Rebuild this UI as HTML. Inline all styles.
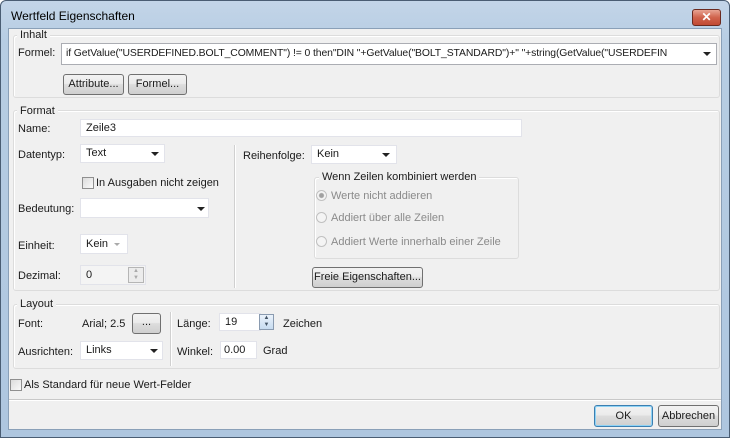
<!DOCTYPE html>
<html><head><meta charset="utf-8"><style>
*{box-sizing:border-box;margin:0;padding:0}
body{width:730px;height:438px;overflow:hidden;background:#fff;font-family:"Liberation Sans",sans-serif;font-size:11px;color:#1a1a1a;position:relative}
.frame{position:absolute;left:0;top:0;width:730px;height:438px;border-radius:6px 6px 0 0;background:linear-gradient(#c3d5e8,#b7cde3 40px,#aec6df);border:1px solid #4a5d73}
.client{position:absolute;left:8px;top:28px;width:714px;height:402px;background:#f0f0f0;border:1px solid #8aa0b8}
.a{position:absolute;white-space:nowrap}
.grp{position:absolute;border:1px solid #dcdcdc;border-radius:3px;background:#f0f0f0;box-shadow:inset 1px 1px 0 #fff}
.gl{position:absolute;background:#f0f0f0;padding:0 3px;line-height:12px}
.in{position:absolute;background:#fff;border:1px solid #e2e3ea;line-height:16px;padding-left:5px;overflow:hidden;white-space:nowrap}
.btn{position:absolute;border:1px solid #707070;border-radius:3px;background:linear-gradient(#f2f2f2,#ebebeb 45%,#dddddd 50%,#cfcfcf);text-align:center;line-height:19px}
.arr{position:absolute;width:0;height:0;border-left:4px solid transparent;border-right:4px solid transparent;border-top:4px solid #222}
.cb{position:absolute;width:12px;height:12px;border:1px solid #8f8f8f;background:linear-gradient(135deg,#dcdcdc,#fafafa)}
.rd{position:absolute;width:11px;height:11px;border:1px solid #c0c0c0;border-radius:50%;background:#f4f4f4}
.gray{color:#8a8a8a}
</style></head><body>
<div class="frame"></div>
<div class="a" style="left:11px;top:9px;font-size:12px;color:#000">Wertfeld Eigenschaften</div>
<div class="a" style="left:692px;top:9px;width:29px;height:17px;border:1px solid #6b2a1f;border-radius:3px;background:linear-gradient(#e8a493,#d0634c 50%,#c14a33);color:#fff;text-align:center;font-weight:bold;font-size:12px;line-height:15px">✕</div>
<div class="client"></div>

<div class="grp" style="left:13px;top:35px;width:707px;height:63px"></div>
<div class="gl" style="left:17px;top:29px">Inhalt</div>
<div class="a" style="left:18px;top:47px">Formel:</div>
<div class="in" style="left:61px;top:43px;width:656px;height:22px;border-color:#abadb3;line-height:20px;padding-left:4px;padding-right:24px;font-size:10.4px;letter-spacing:-0.1px">if GetValue("USERDEFINED.BOLT_COMMENT") != 0 then"DIN "+GetValue("BOLT_STANDARD")+" "+string(GetValue("USERDEFIN</div>
<div class="arr" style="left:703px;top:52px"></div>
<div class="btn" style="left:63px;top:74px;width:61px;height:21px">Attribute...</div>
<div class="btn" style="left:128px;top:74px;width:59px;height:21px">Formel...</div>

<div class="grp" style="left:13px;top:110px;width:707px;height:181px"></div>
<div class="gl" style="left:17px;top:105px">Format</div>
<div class="a" style="left:18px;top:123px">Name:</div>
<div class="in" style="left:80px;top:119px;width:442px;height:18px">Zeile3</div>
<div class="a" style="left:18px;top:149px">Datentyp:</div>
<div class="in" style="left:80px;top:144px;width:85px;height:19px">Text</div>
<div class="arr" style="left:151px;top:152px"></div>
<div class="a" style="left:234px;top:145px;width:1px;height:143px;background:#d0d0d0;box-shadow:1px 0 0 #fff"></div>
<div class="a" style="left:243px;top:150px">Reihenfolge:</div>
<div class="in" style="left:311px;top:145px;width:86px;height:19px">Kein</div>
<div class="arr" style="left:382px;top:153px"></div>
<div class="cb" style="left:82px;top:177px"></div>
<div class="a" style="left:96px;top:177px">In Ausgaben nicht zeigen</div>
<div class="grp" style="left:314px;top:177px;width:205px;height:82px"></div>
<div class="gl" style="left:319px;top:171px">Wenn Zeilen kombiniert werden</div>
<div class="rd" style="left:316px;top:190px;background:radial-gradient(#a0a0a0 2px,#f4f4f4 3px)"></div>
<div class="a gray" style="left:331px;top:190px">Werte nicht addieren</div>
<div class="rd" style="left:316px;top:212px"></div>
<div class="a gray" style="left:331px;top:212px">Addiert über alle Zeilen</div>
<div class="rd" style="left:316px;top:236px"></div>
<div class="a gray" style="left:331px;top:236px">Addiert Werte innerhalb einer Zeile</div>
<div class="a" style="left:18px;top:203px">Bedeutung:</div>
<div class="in" style="left:80px;top:198px;width:129px;height:20px"></div>
<div class="arr" style="left:197px;top:207px"></div>
<div class="a" style="left:18px;top:240px">Einheit:</div>
<div class="in" style="left:80px;top:234px;width:48px;height:20px;line-height:18px">Kein</div>
<div class="arr" style="left:114px;top:243px;border-top-color:#aaa;border-width:3px 3px 0"></div>
<div class="a" style="left:18px;top:270px">Dezimal:</div>
<div class="in" style="left:80px;top:265px;width:66px;height:20px;background:#f4f4f4;line-height:18px">0</div>
<div class="a" style="left:128px;top:267px;width:16px;height:16px;border:1px solid #b5b5b5;background:#ececec;font-size:6px;color:#aaa;text-align:center;line-height:7px">▲<br>▼</div>
<div class="btn" style="left:312px;top:267px;width:111px;height:21px">Freie Eigenschaften...</div>

<div class="grp" style="left:13px;top:304px;width:707px;height:65px"></div>
<div class="gl" style="left:17px;top:298px">Layout</div>
<div class="a" style="left:18px;top:318px">Font:</div>
<div class="a" style="left:82px;top:318px">Arial; 2.5</div>
<div class="btn" style="left:132px;top:313px;width:29px;height:21px;line-height:17px">...</div>
<div class="a" style="left:170px;top:312px;width:1px;height:54px;background:#d0d0d0;box-shadow:1px 0 0 #fff"></div>
<div class="a" style="left:177px;top:318px">Länge:</div>
<div class="in" style="left:219px;top:313px;width:42px;height:18px">19</div>
<div class="a" style="left:259px;top:314px;width:15px;height:16px;border:1px solid #8a9bb0;background:linear-gradient(#eaf2fb,#c7dcf0);font-size:6px;color:#456;text-align:center;line-height:7px">▲<br>▼</div>
<div class="a" style="left:283px;top:318px">Zeichen</div>
<div class="a" style="left:18px;top:346px">Ausrichten:</div>
<div class="in" style="left:80px;top:341px;width:83px;height:19px">Links</div>
<div class="arr" style="left:150px;top:349px"></div>
<div class="a" style="left:177px;top:346px">Winkel:</div>
<div class="in" style="left:220px;top:341px;width:37px;height:18px;padding-left:3px">0.00</div>
<div class="a" style="left:263px;top:345px">Grad</div>

<div class="cb" style="left:10px;top:379px"></div>
<div class="a" style="left:24px;top:379px">Als Standard für neue Wert-Felder</div>
<div class="a" style="left:9px;top:399px;width:712px;height:1px;background:#c8c8c8;box-shadow:0 1px 0 #fff"></div>
<div class="btn" style="left:594px;top:405px;width:59px;height:22px;border-color:#3c7fb1;box-shadow:inset 0 0 0 1px #8fd3f5;line-height:20px">OK</div>
<div class="btn" style="left:658px;top:405px;width:61px;height:22px;line-height:20px">Abbrechen</div>
</body></html>
